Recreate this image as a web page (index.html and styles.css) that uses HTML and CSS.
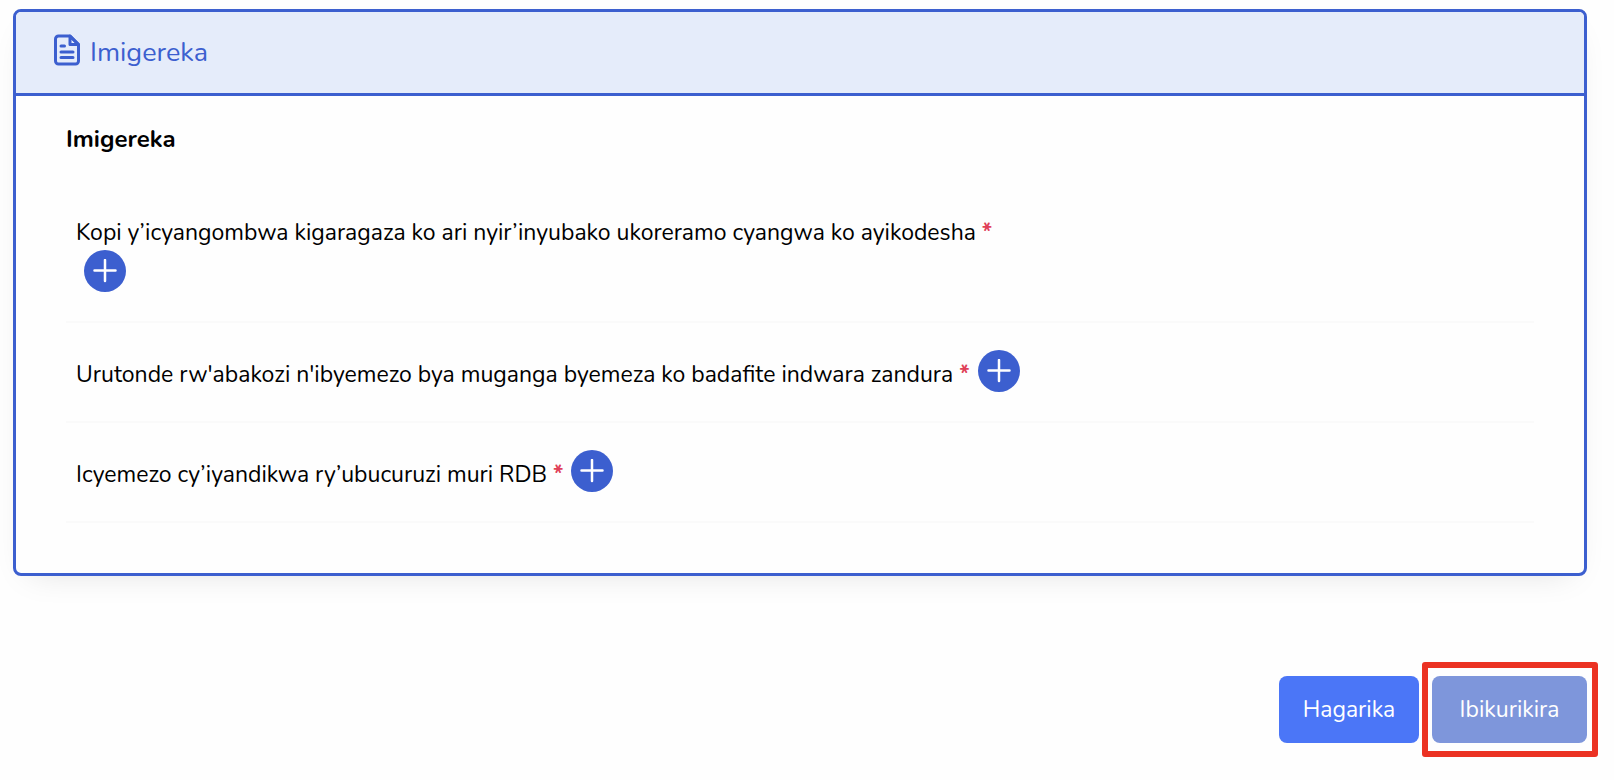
FILE: index.html
```html
<!DOCTYPE html>
<html lang="rw">
  <head>
    <meta charset="UTF-8" />
    <meta name="viewport" content="width=device-width, initial-scale=1.0" />
    <title>Imigereka</title>
    <link rel="stylesheet" href="styles.css">
  </head>
  <body>
    <main class="page">
      <section class="card">
        <header class="card-header">
          <svg class="file-icon" viewBox="0 0 26 32" fill="none" stroke="currentColor" stroke-width="3" stroke-linecap="round" stroke-linejoin="round" aria-hidden="true">
            <path d="M16 2H4.500a3 3 0 0 0-3 3v22a3 3 0 0 0 3 3h17a3 3 0 0 0 3-3V10.500z" />
            <path d="M16 2v8.500h8.500z" />
            <path d="M7 12h3.500M7 18h12M7 23.500h12" />
          </svg>
          <h1 class="card-title">Imigereka</h1>
        </header>

        <div class="card-body">
          <h2 class="section-title">Imigereka</h2>
          <ul class="attachments">
            <li class="attachment attachment-stacked">
              <label for="add-1">Kopi y’icyangombwa kigaragaza ko ari nyir’inyubako ukoreramo cyangwa ko ayikodesha <span class="required">*</span></label>
              <button type="button" class="add-btn" id="add-1">
                <svg viewBox="0 0 24 24" aria-hidden="true"><path d="M12 1v21M1.500 11.500h21" /></svg>
              </button>
            </li>
            <li class="attachment">
              <label for="add-2">Urutonde rw'abakozi n'ibyemezo bya muganga byemeza ko badafite indwara zandura <span class="required">*</span></label>
              <button type="button" class="add-btn" id="add-2">
                <svg viewBox="0 0 24 24" aria-hidden="true"><path d="M12 1v21M1.500 11.500h21" /></svg>
              </button>
            </li>
            <li class="attachment">
              <label for="add-3">Icyemezo cy’iyandikwa ry’ubucuruzi muri RDB <span class="required">*</span></label>
              <button type="button" class="add-btn" id="add-3">
                <svg viewBox="0 0 24 24" aria-hidden="true"><path d="M12 1v21M1.500 11.500h21" /></svg>
              </button>
            </li>
          </ul>
        </div>
      </section>

      <div class="actions">
        <button type="button" class="btn btn-cancel">Hagarika</button>
        <div class="highlight">
          <button type="button" class="btn btn-next">Ibikurikira</button>
        </div>
      </div>
    </main>
  </body>
</html>
```
FILE: styles.css
```css
* {
  box-sizing: border-box;
}
body {
  margin: 0;
  background: #fefefe;
  color: #000;
  font-family: Nunito, Lato, sans-serif;
  font-size: 23px;
  line-height: 34px;
}
h1,
h2,
ul {
  margin: 0;
  padding: 0;
}
button {
  border: none;
  padding: 0;
  font: inherit;
  cursor: pointer;
}
.page {
  padding: 9px 16px 23px 13px;
}
.card {
  margin-right: 11px;
  border: 3px solid #3c5fcf;
  border-radius: 8px;
  background: #fefefe;
  box-shadow: 0 12px 32px -16px rgba(0, 0, 0, 0.13);
}
.card-header {
  display: flex;
  align-items: center;
  gap: 10px;
  height: 84px;
  padding: 0 38px;
  border-bottom: 3px solid #3c5fcf;
  border-radius: 5px 5px 0 0;
  background: #e5ecfa;
  color: #3c5fcf;
}
.file-icon {
  width: 26px;
  height: 32px;
  margin-bottom: 6px;
}
.card-title {
  font-size: 27px;
  font-weight: 400;
}
.card-body {
  padding: 26px 50px 50px;
}
.section-title {
  margin-bottom: 33px;
  font-size: 24px;
  font-weight: 700;
}
.attachments {
  list-style: none;
}
.attachment {
  display: flex;
  align-items: flex-end;
  padding: 27px 10px 29px;
  border-bottom: 2px solid #fafafa;
}
.attachment-stacked {
  flex-direction: column;
  align-items: flex-start;
}
.required {
  color: #e04058;
  font-weight: 700;
}
.add-btn {
  display: flex;
  align-items: center;
  justify-content: center;
  flex: none;
  width: 42px;
  height: 42px;
  margin-left: 8px;
  border-radius: 50%;
  background: #3c5fcf;
}
.add-btn svg {
  width: 24px;
  height: 24px;
  fill: none;
  stroke: #fff;
  stroke-width: 2.5;
  stroke-linecap: round;
}
.actions {
  display: flex;
  justify-content: flex-end;
  align-items: center;
  gap: 3px;
  margin-top: 86px;
}
.btn {
  height: 67px;
  padding: 0 22px;
  border-radius: 8px;
  color: #fff;
}
.btn-cancel {
  min-width: 140px;
  background: #4b76f7;
}
.btn-next {
  display: block;
  min-width: 155px;
  background: #7e96db;
}
.highlight {
  padding: 8px 5px 8px 4px;
  border: 6px solid #eb3223;
  border-radius: 3px;
}
```
